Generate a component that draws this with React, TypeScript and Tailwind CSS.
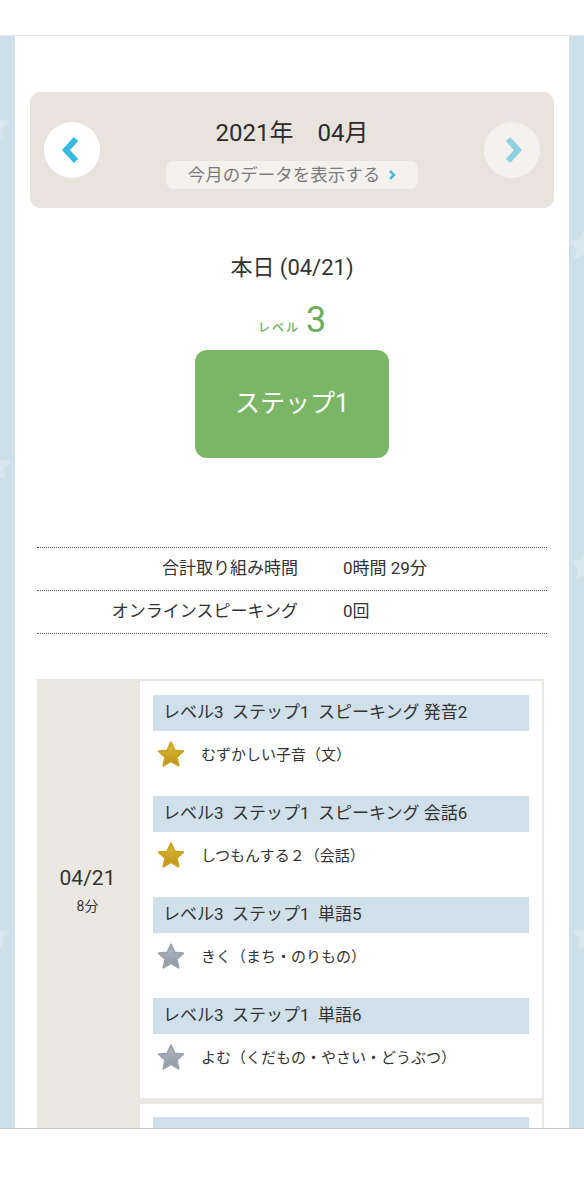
// Pantalla de registro mensual de aprendizaje
const fuente = { fontFamily: 'Roboto, "Noto Sans CJK JP", sans-serif' };

// Estrella redondeada usada en las filas del registro
const Estrella = ({ dorada }: { dorada: boolean }) => (
  <svg width="30" height="30" viewBox="0 0 30 30">
    <defs>
      <linearGradient id={dorada ? "oro" : "plata"} x1="0" y1="0" x2="0" y2="1">
        <stop offset="0" stopColor={dorada ? "#e0c03a" : "#b3bac4"} />
        <stop offset="1" stopColor={dorada ? "#b88f17" : "#8d96a3"} />
      </linearGradient>
    </defs>
    <path
      d="M15 2.5 L18.6 10.4 L27.2 11.2 L20.7 17 L22.6 25.6 L15 21.2 L7.4 25.6 L9.3 17 L2.8 11.2 L11.4 10.4 Z"
      fill={`url(#${dorada ? "oro" : "plata"})`}
      stroke={dorada ? "#c9a21f" : "#9ba3ae"}
      strokeWidth="2"
      strokeLinejoin="round"
    />
  </svg>
);

// Estrellas tenues del fondo lateral
const EstrellaFondo = ({ className }: { className: string }) => (
  <svg className={className} width="40" height="40" viewBox="0 0 30 30">
    <path d="M15 2.5 L18.6 10.4 L27.2 11.2 L20.7 17 L22.6 25.6 L15 21.2 L7.4 25.6 L9.3 17 L2.8 11.2 L11.4 10.4 Z" fill="#d8e7ef" />
  </svg>
);

const Flecha = ({ dir, color }: { dir: "izq" | "der"; color: string }) => (
  <svg width="18" height="28" viewBox="0 0 18 28">
    <path
      d={dir === "izq" ? "M14 3 L4 14 L14 25" : "M4 3 L14 14 L4 25"}
      fill="none"
      stroke={color}
      strokeWidth="6"
    />
  </svg>
);

const registros = [
  { titulo: "レベル3  ステップ1  スピーキング 発音2", detalle: "むずかしい子音（文）", dorada: true },
  { titulo: "レベル3  ステップ1  スピーキング 会話6", detalle: "しつもんする２（会話）", dorada: true },
  { titulo: "レベル3  ステップ1  単語5", detalle: "きく（まち・のりもの）", dorada: false },
  { titulo: "レベル3  ステップ1  単語6", detalle: "よむ（くだもの・やさい・どうぶつ）", dorada: false },
];

export default function App() {
  return (
    <div className="w-[584px] h-[1200px] bg-white flex flex-col text-[#333]" style={fuente}>
      <div className="h-[36px] shrink-0 border-b border-[#e6e6e6]" />

      <div className="relative h-[1092px] shrink-0 overflow-hidden bg-[#cddfe9] px-[15px]">
        <EstrellaFondo className="absolute -left-[26px] top-[70px]" />
        <EstrellaFondo className="absolute -right-[20px] top-[190px]" />
        <EstrellaFondo className="absolute -left-[24px] top-[410px]" />
        <EstrellaFondo className="absolute -right-[22px] top-[510px]" />
        <EstrellaFondo className="absolute -left-[26px] top-[880px]" />
        <EstrellaFondo className="absolute -right-[24px] top-[880px]" />

        <div className="relative h-full bg-white px-[15px] pt-[56px]">
          {/* Cabecera del mes */}
          <div className="h-[116px] rounded-[10px] bg-[#e9e3de] flex items-center justify-between px-[14px]">
            <div className="w-[56px] h-[56px] rounded-full bg-white flex items-center justify-center pr-[2px]">
              <Flecha dir="izq" color="#35bbe0" />
            </div>
            <div className="flex flex-col items-center pt-[6px]">
              <div className="text-[24px] leading-[32px] text-[#2c2c2c]">2021年　04月</div>
              <div className="mt-[12px] h-[28px] w-[252px] rounded-[8px] bg-[#f4f1ee] flex items-center justify-center gap-[8px] text-[17.5px] text-[#7b7b7b]">
                今月のデータを表示する
                <svg width="8" height="12" viewBox="0 0 8 12">
                  <path d="M2 2 L6 6 L2 10" fill="none" stroke="#4cb9dc" strokeWidth="2.5" />
                </svg>
              </div>
            </div>
            <div className="w-[56px] h-[56px] rounded-full bg-[#f4f1ee] flex items-center justify-center pl-[2px]">
              <Flecha dir="der" color="#8dd0e2" />
            </div>
          </div>

          {/* Hoy */}
          <div className="mt-[46px] text-center text-[22px] leading-[28px]">本日 (04/21)</div>
          <div className="mt-[18px] flex items-end justify-center gap-[6px] text-[#6aae5c]">
            <span className="text-[12px] leading-[16px] tracking-[2px] mb-[4px] font-medium">レベル</span>
            <span className="text-[36px] leading-[40px]">3</span>
          </div>
          <div className="mx-auto mt-[10px] w-[194px] h-[108px] rounded-[12px] bg-[#7bb566] flex items-center justify-center text-white text-[25px]">
            ステップ1
          </div>

          {/* Totales */}
          <div className="mx-[7px] mt-[89px] border-t border-dotted border-[#555]">
            <div className="grid grid-cols-[261px_1fr] gap-x-[45px] h-[43px] items-center border-b border-dotted border-[#555] text-[17px]">
              <span className="text-right">合計取り組み時間</span>
              <span>0時間 29分</span>
            </div>
            <div className="grid grid-cols-[261px_1fr] gap-x-[45px] h-[43px] items-center border-b border-dotted border-[#555] text-[17px]">
              <span className="text-right">オンラインスピーキング</span>
              <span>0回</span>
            </div>
          </div>

          {/* Registro diario */}
          <div className="ml-[7px] mr-[10px] mt-[45px] flex flex-col gap-[2px] bg-[#ebe7e2]">
            <div className="flex">
              <div className="w-[101px] shrink-0 bg-[#ebe7e2] flex flex-col items-center justify-center">
                <span className="text-[21px] leading-[28px]">04/21</span>
                <span className="text-[14px] leading-[20px] mt-[4px]">8分</span>
              </div>
              <div className="flex-1 bg-white border-2 border-[#ebe7e2] px-[13px] pt-[14px] pb-[16px] flex flex-col gap-[17px]">
                {registros.map((r) => (
                  <div key={r.titulo}>
                    <div className="h-[36px] bg-[#cfe0ea] flex items-center pl-[10px] text-[17px] whitespace-pre">{r.titulo}</div>
                    <div className="h-[48px] flex items-center gap-[15px] pl-[3px] text-[15px]">
                      <Estrella dorada={r.dorada} />
                      <span>{r.detalle}</span>
                    </div>
                  </div>
                ))}
              </div>
            </div>
            <div className="flex">
              <div className="w-[101px] shrink-0 bg-[#ebe7e2] h-[60px]" />
              <div className="flex-1 bg-white border-2 border-[#ebe7e2] px-[13px] pt-[13px] h-[60px]">
                <div className="h-[36px] bg-[#cfe0ea]" />
              </div>
            </div>
          </div>
        </div>
      </div>

      <div className="flex-1 border-t border-[#c8c8c8] bg-white" />
    </div>
  );
}
